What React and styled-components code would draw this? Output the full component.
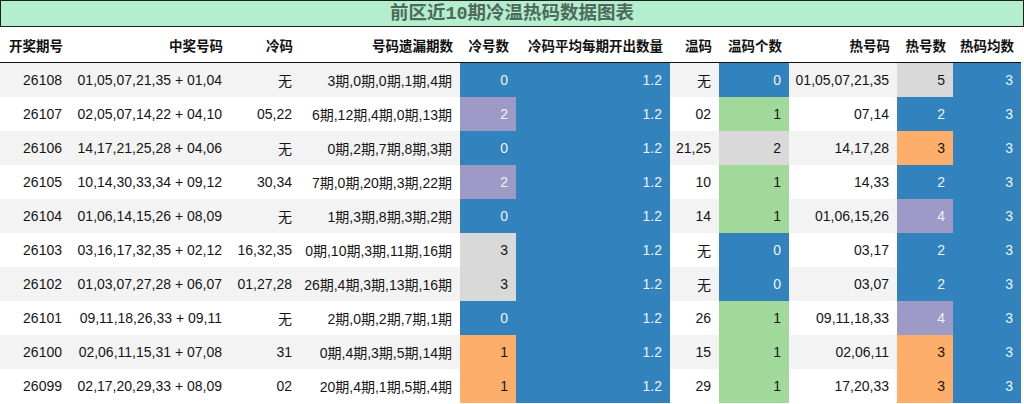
import React from 'react';
import styled, { createGlobalStyle } from 'styled-components';

const GlobalStyle = createGlobalStyle`
  html, body {
    margin: 0;
    padding: 0;
    background: #ffffff;
  }
  body {
    font-family: "Liberation Sans", "Noto Sans CJK SC", sans-serif;
    font-size: 14px;
    color: #111;
  }
`;

const COLORS = {
  blue: '#3182bd',
  purple: '#9e9ac8',
  orange: '#fdae6b',
  green: '#a1d99b',
  grey: '#d9d9d9',
};

const LIGHT_TEXT = ['blue', 'purple'];

const COLUMNS = [
  { title: '开奖期号', width: 70 },
  { title: '中奖号码', width: 160 },
  { title: '冷码', width: 70 },
  { title: '号码遗漏期数', width: 160 },
  { title: '冷号数', width: 56 },
  { title: '冷码平均每期开出数量', width: 154 },
  { title: '温码', width: 49 },
  { title: '温码个数', width: 70 },
  { title: '热号码', width: 108 },
  { title: '热号数', width: 56 },
  { title: '热码均数', width: 68 },
];

const rows = [
  ['26108', '01,05,07,21,35 + 01,04', '无', '3期,0期,0期,1期,4期', [0, 'blue'], '无', [0, 'blue'], '01,05,07,21,35', [5, 'grey']],
  ['26107', '02,05,07,14,22 + 04,10', '05,22', '6期,12期,4期,0期,13期', [2, 'purple'], '02', [1, 'green'], '07,14', [2, 'blue']],
  ['26106', '14,17,21,25,28 + 04,06', '无', '0期,2期,7期,8期,3期', [0, 'blue'], '21,25', [2, 'grey'], '14,17,28', [3, 'orange']],
  ['26105', '10,14,30,33,34 + 09,12', '30,34', '7期,0期,20期,3期,22期', [2, 'purple'], '10', [1, 'green'], '14,33', [2, 'blue']],
  ['26104', '01,06,14,15,26 + 08,09', '无', '1期,3期,8期,3期,2期', [0, 'blue'], '14', [1, 'green'], '01,06,15,26', [4, 'purple']],
  ['26103', '03,16,17,32,35 + 02,12', '16,32,35', '0期,10期,3期,11期,16期', [3, 'grey'], '无', [0, 'blue'], '03,17', [2, 'blue']],
  ['26102', '01,03,07,27,28 + 06,07', '01,27,28', '26期,4期,3期,13期,16期', [3, 'grey'], '无', [0, 'blue'], '03,07', [2, 'blue']],
  ['26101', '09,11,18,26,33 + 09,11', '无', '2期,0期,2期,7期,1期', [0, 'blue'], '26', [1, 'green'], '09,11,18,33', [4, 'purple']],
  ['26100', '02,06,11,15,31 + 07,08', '31', '0期,4期,3期,5期,14期', [1, 'orange'], '15', [1, 'green'], '02,06,11', [3, 'orange']],
  ['26099', '02,17,20,29,33 + 08,09', '02', '20期,4期,1期,5期,4期', [1, 'orange'], '29', [1, 'green'], '17,20,33', [3, 'orange']],
];

const Page = styled.div`
  width: 1024px;
`;

const TitleBar = styled.div`
  box-sizing: border-box;
  height: 27px;
  border: 1px solid #1e1e1e;
  background: #b3eecf;
  display: flex;
  align-items: center;
  justify-content: center;
`;

const TitleText = styled.span`
  font-family: "Noto Sans CJK SC", sans-serif;
  font-weight: bold;
  font-size: 18.5px;
  line-height: 1;
  color: #4f6a5a;
`;

const MonoNum = styled.span`
  font-family: "Liberation Mono", monospace;
`;

const Table = styled.div`
  display: grid;
  grid-template-columns: ${props => props.columns};
  width: 1021px;
`;

const HeadCell = styled.div`
  height: 35px;
  border-bottom: 1px solid #111;
  display: flex;
  align-items: center;
  justify-content: flex-end;
  padding-right: 7px;
  font-family: "Noto Sans CJK SC", sans-serif;
  font-weight: bold;
  font-size: 13.5px;
  color: #111;
  white-space: nowrap;
`;

const Cell = styled.div`
  height: 34px;
  display: flex;
  align-items: center;
  justify-content: flex-end;
  padding-right: 8px;
  white-space: nowrap;
  background: ${props => (props.tone ? COLORS[props.tone] : props.striped ? '#f3f3f3' : '#ffffff')};
  color: ${props => (LIGHT_TEXT.includes(props.tone) ? '#eef2f6' : '#151515')};
`;

function App() {
  const template = COLUMNS.map(c => `${c.width}px`).join(' ');

  return (
    <Page>
      <GlobalStyle />
      <TitleBar>
        <TitleText>
          前区近<MonoNum>10</MonoNum>期冷温热码数据图表
        </TitleText>
      </TitleBar>
      <Table columns={template}>
        {COLUMNS.map(c => (
          <HeadCell key={c.title}>{c.title}</HeadCell>
        ))}
        {rows.map((r, i) => {
          const striped = i % 2 === 0;
          const [issue, numbers, cold, missing, coldCount, warm, warmCount, hot, hotCount] = r;
          return (
            <React.Fragment key={issue}>
              <Cell striped={striped}>{issue}</Cell>
              <Cell striped={striped}>{numbers}</Cell>
              <Cell striped={striped}>{cold}</Cell>
              <Cell striped={striped}>{missing}</Cell>
              <Cell tone={coldCount[1]}>{coldCount[0]}</Cell>
              <Cell tone="blue">1.2</Cell>
              <Cell striped={striped}>{warm}</Cell>
              <Cell tone={warmCount[1]}>{warmCount[0]}</Cell>
              <Cell striped={striped}>{hot}</Cell>
              <Cell tone={hotCount[1]}>{hotCount[0]}</Cell>
              <Cell tone="blue">3</Cell>
            </React.Fragment>
          );
        })}
      </Table>
    </Page>
  );
}

export default App;
